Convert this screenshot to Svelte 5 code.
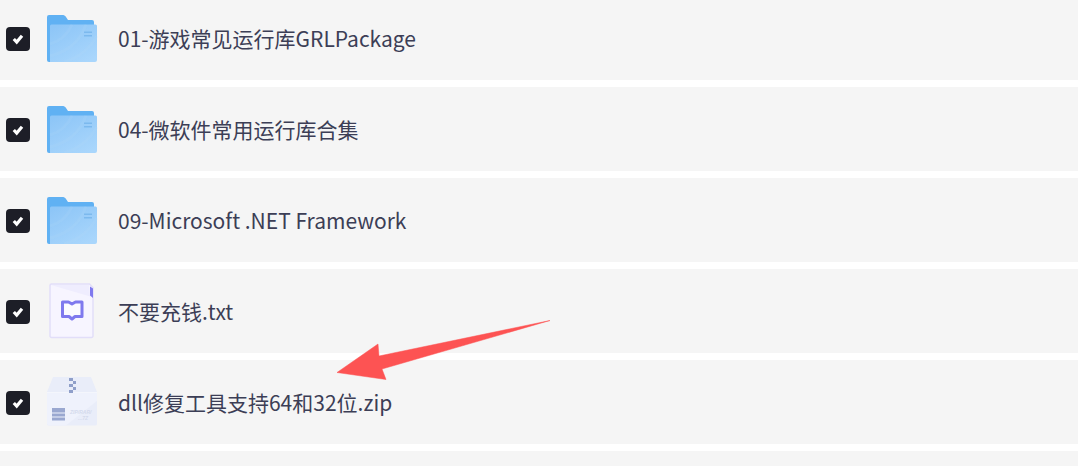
<script>
  const rows = [
    { name: '01-游戏常见运行库GRLPackage', kind: 'folder' },
    { name: '04-微软件常用运行库合集', kind: 'folder' },
    { name: '09-Microsoft .NET Framework', kind: 'folder' },
    { name: '不要充钱.txt', kind: 'txt' },
    { name: 'dll修复工具支持64和32位.zip', kind: 'zip' },
    { name: '', kind: 'none' }
  ];
</script>

<div class="page">
  <svg class="defs" width="0" height="0">
    <defs>
      <linearGradient id="fg" x1="0.2" y1="0" x2="0.8" y2="1">
        <stop offset="0" stop-color="#8ec6f7"/>
        <stop offset="1" stop-color="#a9d6fc"/>
      </linearGradient>
    </defs>
  </svg>
  <div class="list">
    {#each rows as row}
      <div class="row">
        {#if row.kind !== 'none'}
          <span class="check">
            <svg width="14" height="14" viewBox="0 0 14 14"><path d="M2.800 7 5.700 10 11 3.800" fill="none" stroke="#fff" stroke-width="3.200"/></svg>
          </span>
          <span class="icon">
            {#if row.kind === 'folder'}
              <svg width="52" height="48" viewBox="0 0 52 48">
                <path d="M1 3a2 2 0 0 1 2-2h13c2 0 3 .6 4 2l2 3h24a2 2 0 0 1 2 2v6H1z" fill="#60b1f3"/>
                <path d="M1 10h4v38H3a2 2 0 0 1-2-2z" fill="#60b1f3"/>
                <path d="M4 12a1.500 1.500 0 0 1 1.500-1.500h44a1.500 1.500 0 0 1 1.500 1.500v34a2 2 0 0 1-2 2H4z" fill="url(#fg)"/>
                <path d="M4 30c10-3 18-10 22-19.500M4 42c16-4 30-14 36-31.500M18 48c14-4 26-14 33-26" fill="none" stroke="#b5dbfb" stroke-opacity=".14" stroke-width="3"/>
                <path d="M38 17.500h8v1.500h-8zM38 21h8v1.500h-8z" fill="#7cb9ee"/>
              </svg>
            {:else if row.kind === 'txt'}
              <svg width="52" height="56" viewBox="0 0 52 56">
                <path d="M5.500 1h38l3.500 3.500V53a1.500 1.500 0 0 1-1.500 1.500H5.500A1.500 1.500 0 0 1 4 53V2.500C4 1.500 4.500 1 5.500 1z" fill="#f7f5ff" stroke="#e2def9" stroke-width="1.500"/>
                <path d="M5 2h38l1 10.500 2 1.500z" fill="#efedfe"/>
                <path d="M44 3.500 47 5.500V15l-3-2.500z" fill="#7f79ee"/>
                <path d="M16.500 19h6l3.500 2 3.500-2h6.500v14.500h-7l-3 2.500-3-2.500h-6.500z" fill="#fbfaff" stroke="#7f79ee" stroke-width="3" stroke-linejoin="round"/>
              </svg>
            {:else}
              <svg width="52" height="52" viewBox="0 0 52 52">
                <path d="M7 1h38l6 15v32a1.500 1.500 0 0 1-1.500 1.500H2.500A1.500 1.500 0 0 1 1 48V16z" fill="#e9edf9"/>
                <path d="M1 16.500h50" stroke="#f4f6fc" stroke-width="1"/>
                <path d="M1 48V17h50v8L20 49.500H2.500z" fill="#eff2fc"/>
                <path d="M23 2h4v3h-4zM27 5h3v3h-3zM23 8h4v3h-4zM27 11h3v3h-3zM23 14h4v3h-4z" fill="#8f9fc9"/>
                <path d="M6 32h13v4.500H6zM6 37.500h13v3H6zM6 41.500h13v3H6z" fill="#9aa8d0"/>
                <text x="24" y="37.500" class="ziptext">ZIP/RAR/</text>
                <text x="32" y="44" class="ziptext">...7Z</text>
              </svg>
            {/if}
          </span>
          <span class="name">{row.name}</span>
        {/if}
      </div>
    {/each}
  </div>
  <svg class="arrow" width="1078" height="466" viewBox="0 0 1078 466">
    <path d="M550 320.500 379 356 378 344 337 372.500 386 379.500 382 369z" fill="#fd5353" stroke="#fd5353" stroke-width="0.500" stroke-linejoin="round"/>
  </svg>
</div>

<style>
  :global(body) {
    margin: 0;
    background: #fff;
  }
  .page {
    position: relative;
    width: 1078px;
    height: 466px;
    overflow: hidden;
    font-family: "Noto Sans CJK SC", "Noto Sans", sans-serif;
  }
  .defs {
    position: absolute;
  }
  .list {
    display: flex;
    flex-direction: column;
    gap: 7px;
    margin-top: -4px;
  }
  .row {
    height: 84px;
    flex: none;
    display: flex;
    align-items: center;
    background: #f5f5f5;
  }
  .check {
    margin-left: 6px;
    width: 24px;
    height: 24px;
    border-radius: 4px;
    background: #1d1e27;
    display: flex;
    align-items: center;
    justify-content: center;
    flex: none;
    position: relative;
    top: 1px;
  }
  .icon {
    margin-left: 16px;
    width: 52px;
    flex: none;
    display: flex;
    align-items: center;
    justify-content: center;
  }
  .name {
    margin-left: 20px;
    font-size: 21px;
    color: #3c3e56;
  }
  .ziptext {
    font-size: 5px;
    fill: #d4daec;
    font-family: "Liberation Sans", sans-serif;
    font-weight: 700;
    font-style: italic;
  }
  .arrow {
    position: absolute;
    left: 0;
    top: 0;
    pointer-events: none;
  }
</style>
